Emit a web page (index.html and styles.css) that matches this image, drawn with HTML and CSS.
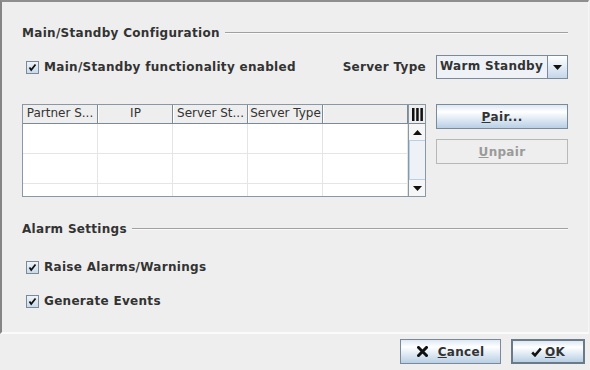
FILE: index.html
```html
<!DOCTYPE html>
<html>
<head>
<meta charset="utf-8">
<link rel="stylesheet" href="styles.css">
</head>
<body>
<div class="dialog">
  <div class="panel">
    <div class="group-title first"><span>Main/Standby Configuration</span><i class="rule"></i></div>
    <div class="row-config">
      <label class="check"><span class="box"><svg width="11" height="11" viewBox="0 0 11 11"><path d="M2.5 5.5 L4.2 8 L8.5 2.5" fill="none" stroke="#111" stroke-width="1.8"/></svg></span>Main/Standby functionality enabled</label>
      <div class="server-type">
        <span class="lbl">Server Type</span>
        <div class="combo"><span class="combo-text">Warm Standby</span><span class="combo-btn"><svg width="9" height="5" viewBox="0 0 9 5"><path d="M0 0 H9 L4.5 5 Z" fill="#111"/></svg></span></div>
      </div>
    </div>
    <div class="row-table">
      <div class="table">
        <div class="tmain">
          <div class="thead">
            <div class="th">Partner S...</div>
            <div class="th">IP</div>
            <div class="th">Server St...</div>
            <div class="th">Server Type</div>
            <div class="th th-empty"></div>
          </div>
          <div class="tbody">
            <div class="tr"><div class="td"></div><div class="td"></div><div class="td"></div><div class="td"></div><div class="td td-empty"></div></div>
            <div class="tr"><div class="td"></div><div class="td"></div><div class="td"></div><div class="td"></div><div class="td td-empty"></div></div>
            <div class="tr"><div class="td"></div><div class="td"></div><div class="td"></div><div class="td"></div><div class="td td-empty"></div></div>
          </div>
        </div>
        <div class="tside">
          <div class="corner"><svg width="11" height="13" viewBox="0 0 11 13"><rect x="0" y="0" width="2.5" height="13" fill="#111"/><rect x="4.2" y="0" width="2.5" height="13" fill="#111"/><rect x="8.4" y="0" width="2.5" height="13" fill="#111"/></svg></div>
          <div class="vscroll">
            <div class="arrow up"><svg width="9" height="5" viewBox="0 0 9 5"><path d="M0 5 H9 L4.5 0 Z" fill="#111"/></svg></div>
            <div class="thumb"></div>
            <div class="arrow down"><svg width="9" height="5" viewBox="0 0 9 5"><path d="M0 0 H9 L4.5 5 Z" fill="#111"/></svg></div>
          </div>
        </div>
      </div>
      <div class="side-buttons">
        <button class="btn"><u>P</u>air...</button>
        <button class="btn disabled"><u>U</u>npair</button>
      </div>
    </div>
    <div class="group-title alarm"><span>Alarm Settings</span><i class="rule"></i></div>
    <label class="check raise"><span class="box"><svg width="11" height="11" viewBox="0 0 11 11"><path d="M2.5 5.5 L4.2 8 L8.5 2.5" fill="none" stroke="#111" stroke-width="1.8"/></svg></span>Raise Alarms/Warnings</label>
    <label class="check events"><span class="box"><svg width="11" height="11" viewBox="0 0 11 11"><path d="M2.5 5.5 L4.2 8 L8.5 2.5" fill="none" stroke="#111" stroke-width="1.8"/></svg></span>Generate Events</label>
  </div>
  <div class="footer">
    <button class="btn fbtn cancel"><svg width="11" height="11" viewBox="0 0 11 11"><path d="M1.5 1.5 L9.5 9.5 M9.5 1.5 L1.5 9.5" stroke="#111" stroke-width="3" stroke-linecap="square"/></svg><span><u>C</u>ancel</span></button>
    <button class="btn fbtn ok"><svg width="11" height="10" viewBox="0 0 11 10"><path d="M1.2 5.5 L4 8.3 L9.8 1.5" fill="none" stroke="#111" stroke-width="2.6"/></svg><span><u>O</u>K</span></button>
  </div>
</div>
</body>
</html>
```

FILE: styles.css
```css
* { box-sizing: border-box; }
html, body { margin: 0; padding: 0; }
body {
  width: 590px;
  height: 370px;
  background: #eeeeee;
  font-family: "DejaVu Sans", sans-serif;
  font-size: 12px;
  color: #333333;
  overflow: hidden;
}
.dialog { width: 590px; height: 370px; }

.panel {
  width: 589px;
  height: 334px;
  border-top: 2px solid #8e8e8e;
  border-left: 2px solid #858585;
  border-bottom: 2px solid #fbfbfb;
  border-right: 1px solid #f6f6f6;
  padding: 0 20px;
  display: flex;
  flex-direction: column;
}

.group-title {
  display: flex;
  align-items: center;
  height: 15px;
  font-weight: bold;
  letter-spacing: 0.3px;
  gap: 5px;
}
.group-title.first { margin-top: 23px; }
.group-title.alarm { margin-top: 24px; }
.group-title .rule {
  flex: 1;
  height: 1px;
  background: #a0a0a0;
  border-bottom: 1px solid #fafafa;
  box-sizing: content-box;
}

.check {
  display: flex;
  align-items: center;
  font-weight: bold;
  letter-spacing: 0.3px;
  height: 16px;
  padding-left: 4px;
}
.check .box {
  width: 13px;
  height: 13px;
  border: 1px solid #7a8a99;
  background: linear-gradient(#eef3f8, #c9dbeb);
  margin-right: 5px;
  display: flex;
  align-items: center;
  justify-content: center;
}
.check.raise { margin-top: 23px; }
.check.events { margin-top: 18px; }

.row-config {
  margin-top: 15px;
  display: flex;
  align-items: center;
  justify-content: space-between;
  height: 24px;
}
.server-type { display: flex; align-items: center; gap: 10px; font-weight: bold; letter-spacing: 0.3px; }
.combo {
  display: flex;
  width: 132px;
  height: 24px;
  border: 1px solid #7a8a99;
}
.combo-text {
  flex: 1;
  background: #eef2f6;
  border-right: 1px solid #7a8a99;
  padding-left: 3px;
  line-height: 21px;
}
.combo-btn {
  width: 19px;
  background: linear-gradient(#ffffff, #c5d7ea);
  display: flex;
  align-items: center;
  justify-content: center;
}

.row-table {
  margin-top: 25px;
  display: flex;
  justify-content: space-between;
}
.table {
  width: 404px;
  height: 93px;
  border: 1px solid #8a98a6;
  display: flex;
  background: #ffffff;
}
.tmain { width: 385px; display: flex; flex-direction: column; }
.thead {
  display: flex;
  height: 19px;
  background: #eeeeee;
  border-bottom: 1px solid #7a8a99;
}
.th {
  width: 75px;
  border-right: 1px solid #7a8a99;
  border-left: 1px solid #ffffff;
  font-weight: normal;
  text-align: center;
  line-height: 17px;
  white-space: nowrap;
  overflow: hidden;
}
.th:first-child { border-left: none; }
.th-empty { width: 85px; }
.tbody { flex: 1; overflow: hidden; }
.tr { display: flex; height: 30px; border-bottom: 1px solid #e5e5e5; }
.td { width: 75px; border-right: 1px solid #e5e5e5; }
.td-empty { width: 85px; }

.tside { width: 17px; display: flex; flex-direction: column; border-left: 1px solid #8a98a6; }
.corner {
  height: 19px;
  background: #eeeeee;
  border-bottom: 1px solid #7a8a99;
  display: flex;
  align-items: center;
  justify-content: center;
}
.vscroll { flex: 1; display: flex; flex-direction: column; background: #eeeeee; }
.arrow {
  height: 16px;
  background: #f6f6f6;
  display: flex;
  align-items: center;
  justify-content: center;
}
.thumb {
  flex: 1;
  border: 1px solid #b8cfe5;
  border-right: none;
  background: #eef2f6;
}

.side-buttons { display: flex; flex-direction: column; gap: 10px; }
.btn {
  font-family: inherit;
  font-size: 12px;
  font-weight: bold;
  letter-spacing: 0.3px;
  color: #333333;
  width: 132px;
  height: 25px;
  padding: 0;
  margin: 0;
  border: 1px solid #7a8a99;
  background: linear-gradient(#dde8f3 0%, #ffffff 30%, #b8cfe5 100%);
  display: flex;
  align-items: center;
  justify-content: center;
}
.btn u { text-decoration: underline; }
.btn.disabled {
  background: #eeeeee;
  border-color: #b8b8b8;
  color: #9a9a9a;
}

.footer {
  display: flex;
  justify-content: flex-end;
  gap: 10px;
  padding: 5px 5px 0 0;
}
.fbtn { height: 25px; gap: 10px; }
.fbtn.cancel { width: 101px; }
.fbtn.ok { width: 74px; border: 2px solid #6b7a88; gap: 3px; }
```
